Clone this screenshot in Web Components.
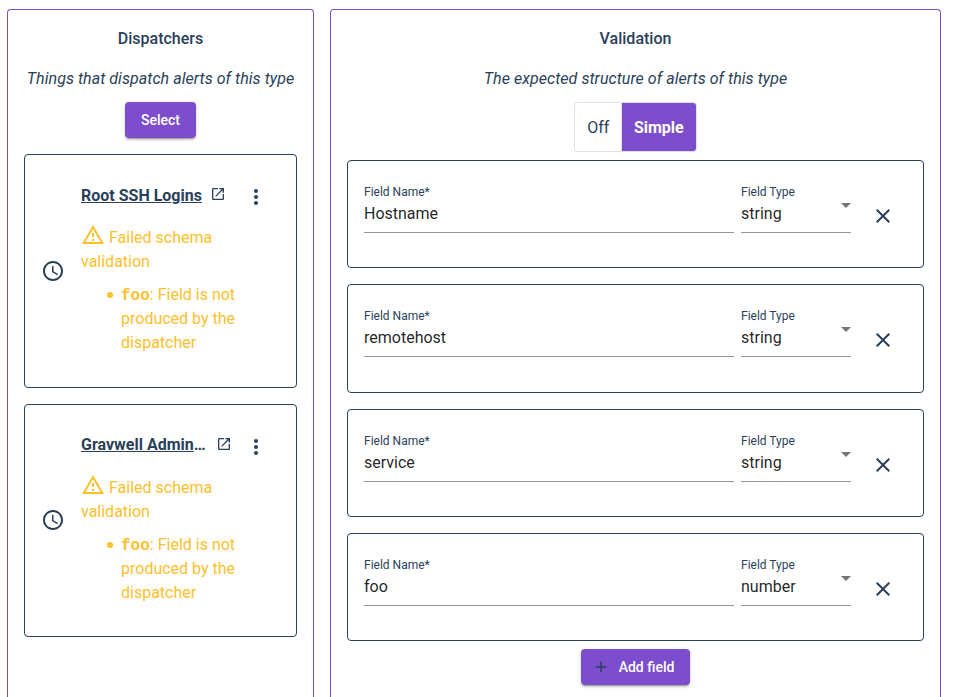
<!DOCTYPE html>
<html lang="en">
<head>
<meta charset="utf-8">
<title>Alert</title>
<style>
body{margin:0;background:#fff;font:400 16px/24px Roboto,sans-serif;color:#2a3f59;height:697px;overflow:hidden}
</style>
</head>
<body>
<alert-editor></alert-editor>
<script>
const define = (name, html, setup) => {
  const t = document.createElement('template');
  t.innerHTML = '<style>*{box-sizing:border-box}svg{display:block;fill:currentColor;flex:none}:host{box-sizing:border-box}</style>' + html;
  customElements.define(name, class extends HTMLElement {
    constructor() {
      super();
      this.attachShadow({mode: 'open'}).appendChild(t.content.cloneNode(true));
    }
    connectedCallback() { if (setup) setup(this, this.shadowRoot); }
  });
};

define('ui-panel', `<style>
:host{display:flex;flex-direction:column;align-items:center;border:1px solid #7c4dcc;border-bottom:0;border-radius:4px 4px 0 0;padding:17px 16px 0;height:688px}
h2{margin:0;font-size:16px;line-height:24px;font-weight:500}
p{margin:16px 0 11px;font-style:italic;white-space:nowrap;letter-spacing:.055px}
</style><h2><slot name="heading"></slot></h2><p><slot name="hint"></slot></p><slot></slot>`);

define('ui-button', `<style>
:host{display:flex;align-items:center;height:36px;padding:0 16px;border-radius:4px;background:#7c4dcc;color:#fff;font-size:14px;font-weight:500;line-height:36px;flex:none;
box-shadow:0 3px 1px -2px rgba(0,0,0,.2),0 2px 2px rgba(0,0,0,.14),0 1px 5px rgba(0,0,0,.12)}
</style><slot></slot>`);

define('mode-toggle', `<style>
:host{display:flex;border:1px solid #e0e0e0;border-radius:4px;overflow:hidden;height:50px;line-height:50px;flex:none}
span{padding:0 12px}
.on{background:#7c4dcc;color:#fff;font-weight:700;border-left:1px solid #e0e0e0;padding:0 12px 0 11.5px}
</style><span>Off</span><span class="on">Simple</span>`);

define('dispatcher-card', `<style>
:host{display:flex;align-items:center;width:273px;height:233.6px;border:1px solid #2a3f59;border-radius:4px;padding:0 16px;margin-bottom:16px;flex:none}
.body{margin-left:16px;width:187px;height:100%;padding-top:27px}
.head{display:flex;align-items:center;height:28px}
.name{font-weight:700;white-space:nowrap}
.name ::slotted(*){text-decoration:underline}
.open{margin-left:8px;margin-top:-5px}
:host([clipped]) .name{margin-top:-2px}
:host([clipped]) .open{margin-left:10px;margin-top:-4px}
.more{margin-left:auto;margin-top:2px}
.warn{color:#fbc02d;width:160px;margin-top:14px}
.warn svg{display:inline-block;vertical-align:-1px;margin-right:4px}
ul{color:#fbc02d;margin:9px 0 0;padding-left:40px;width:170px;list-style:none}
li::before{content:"";display:inline-block;width:6px;height:6px;border-radius:50%;background:currentColor;margin:0 8px 0 -14px;vertical-align:2px}
code{font:700 16px "Liberation Mono",monospace;line-height:1}
</style>
<svg width="24" height="24" viewBox="0 0 24 24"><path d="M11.99 2C6.47 2 2 6.48 2 12s4.47 10 9.99 10C17.52 22 22 17.52 22 12S17.52 2 11.99 2zM12 20c-4.42 0-8-3.58-8-8s3.58-8 8-8 8 3.58 8 8-3.58 8-8 8zm.5-13H11v6l5.25 3.15.75-1.23-4.5-2.67z"/></svg>
<div class="body"><div class="head"><span class="name"><slot></slot></span>
<svg class="open" width="16" height="16" viewBox="0 0 24 24"><path d="M19 19H5V5h7V3H5a2 2 0 0 0-2 2v14a2 2 0 0 0 2 2h14c1.1 0 2-.9 2-2v-7h-2v7zM14 3v2h3.59l-9.83 9.83 1.41 1.41L19 6.41V10h2V3h-7z"/></svg>
<svg class="more" width="24" height="24" viewBox="0 0 24 24"><path d="M12 8c1.1 0 2-.9 2-2s-.9-2-2-2-2 .9-2 2 .9 2 2 2zm0 2c-1.1 0-2 .9-2 2s.9 2 2 2 2-.9 2-2-.9-2-2-2zm0 6c-1.1 0-2 .9-2 2s.9 2 2 2 2-.9 2-2-.9-2-2-2z"/></svg></div>
<div class="warn"><svg width="24" height="20" viewBox="0 1 24 20"><path d="M12 5.99L19.53 19H4.47L12 5.99M12 2L1 21h22L12 2zm1 14h-2v2h2v-2zm0-6h-2v4h2v-4z"/></svg>Failed schema validation</div>
<ul><li><code>foo</code>: Field is not produced by the dispatcher</li></ul></div>`);

define('form-field', `<style>
:host{display:block;height:48px;border-bottom:1px solid #949494;position:relative}
label{display:block;font-size:12px;line-height:14px}
.v{color:rgba(0,0,0,.87);line-height:24px;margin-top:3px}
i{display:none;position:absolute;right:0;top:18px;border:5px solid transparent;border-top-color:#757575;border-bottom:0}
:host([select]) i{display:block}
</style><label></label><div class="v"><slot></slot></div><i></i>`, (el, root) => {
  root.querySelector('label').textContent = el.getAttribute('label');
});

define('field-row', `<style>
:host{display:flex;width:577px;height:108.3px;border:1px solid #2a3f59;border-radius:4px;padding:24px 16px 0;margin-bottom:16px;flex:none}
.n{width:370px;margin-right:7px}.t{width:110px}
svg{margin:19px 0 0 20px}
</style><form-field class="n" label="Field Name*"><slot></slot></form-field>
<form-field class="t" label="Field Type" select><slot name="type"></slot></form-field>
<svg width="24" height="24" viewBox="0 0 24 24"><path d="M19 6.41L17.59 5 12 10.59 6.41 5 5 6.41 10.59 12 5 17.59 6.41 19 12 13.41 17.59 19 19 17.59 13.41 12z"/></svg>`);

define('alert-editor', `<style>
:host{display:flex;gap:16px;padding:9px 0 0 7px}
.l{width:307px}.r{width:611px}
.l ui-button{margin-bottom:16px}
mode-toggle{margin-bottom:8px}
field-row:last-of-type{margin-bottom:8px}
.plus{color:#2a3f59;margin:0 9px 0 -5px}
</style>
<ui-panel class="l"><span slot="heading">Dispatchers</span><span slot="hint">Things that dispatch alerts of this type</span>
<ui-button>Select</ui-button>
<dispatcher-card><span>Root SSH Logins</span></dispatcher-card>
<dispatcher-card clipped><span>Gravwell Admin</span>…</dispatcher-card>
</ui-panel>
<ui-panel class="r"><span slot="heading">Validation</span><span slot="hint">The expected structure of alerts of this type</span>
<mode-toggle></mode-toggle>
<field-row>Hostname<span slot="type">string</span></field-row>
<field-row>remotehost<span slot="type">string</span></field-row>
<field-row>service<span slot="type">string</span></field-row>
<field-row>foo<span slot="type">number</span></field-row>
<ui-button><svg class="plus" width="18" height="18" viewBox="0 0 24 24"><path d="M19 13h-6v6h-2v-6H5v-2h6V5h2v6h6v2z"/></svg>Add field</ui-button>
</ui-panel>`);
</script>
</body>
</html>
